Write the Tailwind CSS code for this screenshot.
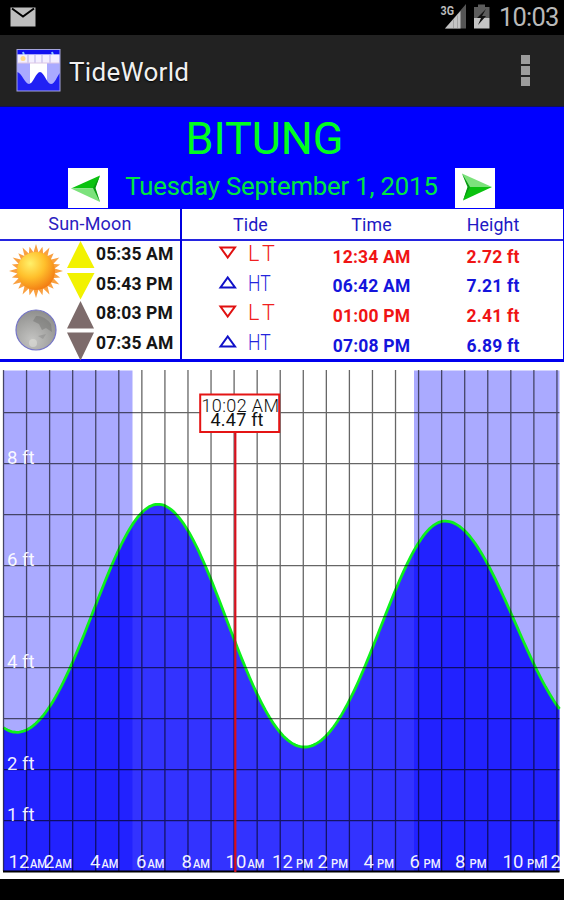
<!DOCTYPE html>
<html lang="en">
<head>
  <meta charset="UTF-8" />
  <meta name="viewport" content="width=device-width, initial-scale=1.0">
  <title>TideWorld</title>
  <script src="https://cdn.jsdelivr.net/npm/@tailwindcss/browser@4"></script>
</head>
<body class="w-[564px] h-[900px] bg-black overflow-hidden font-['Roboto',sans-serif]">

  <!-- status bar -->
  <div class="h-[35px] flex items-center justify-between pl-[10px] pr-[6px] text-[#b9b9b9]">
    <svg class="w-[26px] h-5 -mt-px" viewBox="0 0 26 20">
      <rect x="0.5" y="0.5" width="25" height="19" fill="#bebebe" />
      <path d="M2 1.500 L13 9.500 L24 1.500" fill="none" stroke="#000" stroke-width="2" />
    </svg>
    <div class="flex items-center">
      <svg class="w-[54px] h-[35px]" viewBox="440 0 54 35">
        <path d="M445 28.500 L466 4 V28.500 Z" fill="#555" />
        <path d="M445 28.500 L460.500 11 V28.500 Z" fill="#c4c4c4" />
        <path d="M453.500 19.500 V28 M457.500 15.500 V28" stroke="#999" stroke-width="0.800" />
        <text x="440.500" y="15.300" font-size="12.500" font-weight="700" fill="#bbb" textLength="13.500" lengthAdjust="spacingAndGlyphs">3G</text>
        <path d="M474 7 H478 V4.500 H485 V7 H489.500 V18 H474 Z" fill="#5c5c5c" />
        <path d="M474 18 H489.500 V28.500 H474 Z" fill="#c4c4c4" />
        <path d="M486 9 L477 18 H481 L478 25 L486 16 H482 Z" fill="#111" />
      </svg>
      <span class="ml-[5px] w-[59px] text-[25.500px] leading-[35px] tracking-[-0.8px]">10:03</span>
    </div>
  </div>

  <!-- action bar -->
  <div class="h-[71px] bg-[#222] flex items-center pl-4 pr-[34px]">
    <svg class="w-[45px] h-[43px]" viewBox="0 0 45 43">
      <rect x="1" y="0.500" width="43" height="41.500" fill="#aaf" />
      <rect x="1" y="0.500" width="43" height="5" fill="#1010f0" />
      <path d="M7 3 L8 6 M36 3 L37 6" stroke="#8cc4ff" stroke-width="2" />
      <rect x="1.500" y="5.500" width="42" height="8.500" fill="#f4efff" />
      <path d="M12 6 V14 M19 6 V14 M26 6 V14 M34 6 V14" stroke="#ccc6ef" stroke-width="1.500" />
      <circle cx="7" cy="9.500" r="2.500" fill="#ffd98a" />
      <rect x="14" y="14" width="17" height="20" fill="#fff" />
      <path d="M1 14 H44" stroke="#dcc6e6" stroke-width="1.200" />
      <path d="M1 23 C6 24 9 35 13 35 C17 35 20 23 24 23 C28 23 31 35 35 35 C39 35 41 27 44 24 V42 H1 Z" fill="#2020f4" />
      <rect x="1" y="0.500" width="43" height="41.500" fill="none" stroke="#a4a4dc" stroke-width="1" />
    </svg>
    <h1 class="ml-2 text-[26px] text-[#f0f0f0] leading-none tracking-[0.3px] pt-[2px] [text-shadow:0_1px_2px_#000]">TideWorld</h1>
    <div class="ml-auto flex flex-col gap-[2px]">
      <span class="size-[9px] bg-[#9c9c9c]"></span>
      <span class="size-[9px] bg-[#9c9c9c]"></span>
      <span class="size-[9px] bg-[#9c9c9c]"></span>
    </div>
  </div>

  <!-- station and date -->
  <div class="h-[103px] bg-[#00f] border-t border-[#11115a]">
    <h2 class="h-[59px] pr-[35px] text-[45px] leading-[63px] text-center text-[#00ff1e] tracking-[-0.1px]">BITUNG</h2>
    <div class="flex items-center pl-[68px] pr-[69px] justify-between">
      <button class="size-10 bg-white">
        <svg class="size-10" viewBox="0 0 40 40">
          <path d="M3 20.500 L32 7.500 L27 20 Z" fill="#0ac20f" />
          <path d="M3 20.500 L27 20 L32 34 Z" fill="#7ce27c" />
          <path d="M32 7.500 L25 20 L32 34 L27.500 20 Z" fill="#069a12" />
        </svg>
      </button>
      <span class="text-[25.700px] leading-10 pb-[3px] tracking-[-0.17px] text-[#00e640] whitespace-nowrap">Tuesday September 1, 2015</span>
      <button class="size-10 bg-white">
        <svg class="size-10" viewBox="0 0 40 40">
          <path d="M37 19 L7 5.500 L13 19 Z" fill="#7ce27c" />
          <path d="M37 19 L13 19 L8 32.500 Z" fill="#0ac20f" />
          <path d="M8 32.500 L15 19 L7 5.500 L12.500 19 Z" fill="#069a12" />
        </svg>
      </button>
    </div>
  </div>

  <!-- sun, moon and tide table -->
  <div class="h-[153px] bg-white flex border-b-[3px] border-r border-[#00e]">
    <section class="w-[182px] border-r-2 border-[#0000e0]">
      <h3 class="h-8 border-b-2 border-[#2424e0] text-center text-[18px] leading-[29px] tracking-[0.2px] text-[#2a20c0]">Sun-Moon</h3>
      <div class="flex">
        <svg class="w-24 h-[120px]" viewBox="0 241 96 120">
          <defs>
            <radialGradient id="sun" cx="0.350" cy="0.300" r="0.750">
              <stop offset="0" stop-color="#fff06a" />
              <stop offset="0.500" stop-color="#ffc02c" />
              <stop offset="1" stop-color="#f27a12" />
            </radialGradient>
            <radialGradient id="moon" cx="0.400" cy="0.750" r="0.800">
              <stop offset="0" stop-color="#c4c4c2" />
              <stop offset="1" stop-color="#8c8c8a" />
            </radialGradient>
          </defs>
          <g id="rays" fill="#f9a040"></g>
          <circle cx="36" cy="271" r="19" fill="url(#sun)" />
          <circle cx="36" cy="330" r="20" fill="url(#moon)" stroke="#7474c8" stroke-width="1.200" />
          <path d="M36 316 Q44 315 51 324 L52 332 L46 328 L42 330 L39 324 L33 321 Z" fill="#6f6f6d" opacity="0.450" />
          <path d="M38 336 L46 334 L43 339 Z" fill="#777" opacity="0.350" />
          <circle cx="33" cy="343" r="4" fill="#deded8" opacity="0.600" />
          <path d="M80.500 241 L94.500 268 H67 Z M67 273 H94.500 L80.500 299.500 Z" fill="#f2f200" />
          <path d="M80.500 301 L94 328.500 H67 Z M67 332.500 H94 L80.500 360.500 Z" fill="#7d6b6b" />
        </svg>
        <ul class="text-[17.500px] font-bold leading-[29.700px] tracking-[0.1px] text-[#151515] whitespace-nowrap -mt-px">
          <li>05:35 AM</li>
          <li>05:43 PM</li>
          <li>08:03 PM</li>
          <li>07:35 AM</li>
        </ul>
      </div>
    </section>

    <section class="flex-1">
      <div class="h-8 border-b-2 border-[#2424e0] flex text-[17.800px] leading-[32px] tracking-[0.1px] text-[#2018c4]">
        <span class="w-[118px] pl-[51px]">Tide</span>
        <span class="w-[143px] text-center">Time</span>
        <span class="w-[100px] text-center">Height</span>
      </div>
      <div class="h-[29.700px] flex items-center font-bold text-[17.500px] tracking-[0.2px] text-[#f01414]">
        <svg class="w-[118px] h-[30px]" viewBox="0 0 118 30">
          <path d="M38.500 6.500 H53 L45.700 16.500 Z" fill="none" stroke="#e01010" stroke-width="2" />
          <text x="66" y="20" font-size="21.500" font-weight="300" fill="#f02020" textLength="27">L T</text>
        </svg>
        <span class="w-[143px] pt-[2px] text-center">12:34 AM</span>
        <span class="w-[100px] pt-[2px] text-center">2.72 ft</span>
      </div>
      <div class="h-[29.700px] flex items-center font-bold text-[17.500px] tracking-[0.2px] text-[#1414dc]">
        <svg class="w-[118px] h-[30px]" viewBox="0 0 118 30">
          <path d="M38.500 16.500 H53 L45.700 6.500 Z" fill="none" stroke="#1010c8" stroke-width="2" />
          <text x="66" y="20" font-size="21.500" font-weight="300" fill="#2424dc" textLength="23" lengthAdjust="spacingAndGlyphs">HT</text>
        </svg>
        <span class="w-[143px] pt-[2px] text-center">06:42 AM</span>
        <span class="w-[100px] pt-[2px] text-center">7.21 ft</span>
      </div>
      <div class="h-[29.700px] flex items-center font-bold text-[17.500px] tracking-[0.2px] text-[#f01414]">
        <svg class="w-[118px] h-[30px]" viewBox="0 0 118 30">
          <path d="M38.500 6.500 H53 L45.700 16.500 Z" fill="none" stroke="#e01010" stroke-width="2" />
          <text x="66" y="20" font-size="21.500" font-weight="300" fill="#f02020" textLength="27">L T</text>
        </svg>
        <span class="w-[143px] pt-[2px] text-center">01:00 PM</span>
        <span class="w-[100px] pt-[2px] text-center">2.41 ft</span>
      </div>
      <div class="h-[29.700px] flex items-center font-bold text-[17.500px] tracking-[0.2px] text-[#1414dc]">
        <svg class="w-[118px] h-[30px]" viewBox="0 0 118 30">
          <path d="M38.500 16.500 H53 L45.700 6.500 Z" fill="none" stroke="#1010c8" stroke-width="2" />
          <text x="66" y="20" font-size="21.500" font-weight="300" fill="#2424dc" textLength="23" lengthAdjust="spacingAndGlyphs">HT</text>
        </svg>
        <span class="w-[143px] pt-[2px] text-center">07:08 PM</span>
        <span class="w-[100px] pt-[2px] text-center">6.89 ft</span>
      </div>
    </section>
  </div>

  <!-- tide chart -->
  <svg id="chart" class="block w-[564px] h-[517px] bg-white" viewBox="0 362 564 517">
    <rect x="3" y="370.500" width="129.500" height="501" fill="#aaf" />
    <rect x="414" y="370.500" width="145.500" height="501" fill="#aaf" />
    <path id="water" fill="#00f" fill-opacity="0.800" />
    <path id="curve" fill="none" stroke="#0cf01c" stroke-width="2.800" />
    <path id="grid" fill="none" stroke="#000" stroke-opacity="0.600" stroke-width="1.300" />
    <path d="M3 871.500 H559.500" stroke="#000" stroke-width="2" />
    <g id="labels" fill="#fff" fill-opacity="0.950" font-size="18.500"></g>
    <path d="M235.300 432 V872" stroke="#d8101c" stroke-width="2.200" />
    <rect x="200.200" y="394.500" width="79" height="37.500" fill="#fff" stroke="#e41414" stroke-width="2" />
    <text x="201.500" y="411.500" font-size="18" font-weight="300" fill="#111" textLength="77.500">10:02 AM</text>
    <text x="210.500" y="426.300" font-size="18" fill="#111" textLength="53">4.47 ft</text>
  </svg>

  <script>
    const LEFT = 3.5, HOUR = 23.06, ZERO = 871.5, FOOT = 51;

    // hour, feet, sag of the curve on the way to this point
    const tides = [[-5.6, 7.1, 0], [0.57, 2.73, 0], [6.7, 7.2, 8], [13.05, 2.44, 6], [19.15, 6.87, 8], [25.4, 2.79, 2]];

    function levelAt(x) {
      const t = (x - LEFT) / HOUR;
      let i = 1;
      while (tides[i][0] < t) i++;
      const a = tides[i - 1], b = tides[i];
      const p = (t - a[0]) / (b[0] - a[0]);
      const feet = a[1] + (b[1] - a[1]) * (1 - Math.cos(Math.PI * p)) / 2;
      return ZERO - feet * FOOT + b[2] * Math.sin(Math.PI * p) ** 2;
    }

    let line = "";
    for (let x = 3.5; x <= 559.5; x += 2) {
      line += (line ? "L" : "M") + x + " " + levelAt(x).toFixed(1);
    }
    document.getElementById("curve").setAttribute("d", line);
    document.getElementById("water").setAttribute("d", line + "L559.5 871.5H3.5Z");

    let grid = "";
    for (let h = 0; h <= 24; h++) grid += `M${LEFT + h * HOUR} 370V871`;
    for (let f = 1; f <= 9; f++) grid += `M3 ${ZERO - f * FOOT + 0.2}H559.5`;
    document.getElementById("grid").setAttribute("d", grid);

    let labels = "";
    for (const f of [8, 6, 4, 2, 1]) {
      labels += `<text x="7" y="${ZERO - f * FOOT + 0.7}" textLength="27.5">${f} ft</text>`;
    }
    const hours = [
      [8.5, "12", 30, "AM"], [44, "2", 55, "AM"], [90, "4", 101.5, "AM"], [136, "6", 147.5, "AM"],
      [181.5, "8", 193, "AM"], [225.5, "10", 247.5, "AM"], [272, "12", 296, "PM"], [317.5, "2", 331, "PM"],
      [363.5, "4", 377, "PM"], [409.5, "6", 423.5, "PM"], [455, "8", 469.5, "PM"], [502.5, "10", 527, "PM"], [540, "12", 0, ""]
    ];
    for (const [x, n, sx, suffix] of hours) {
      labels += `<text x="${x}" y="868">${n}</text>`;
      if (suffix) labels += `<text x="${sx}" y="868" font-size="12.5" font-weight="500" textLength="17" lengthAdjust="spacingAndGlyphs">${suffix}</text>`;
    }
    document.getElementById("labels").innerHTML = labels;

    // sun rays
    let rays = "";
    for (let i = 0; i < 24; i++) {
      rays += `<path d="M33 254 L36 ${i % 2 ? 246 : 244} L39 254Z" transform="rotate(${i * 15} 36 271)"/>`;
    }
    document.getElementById("rays").innerHTML = rays;
  </script>
</body>
</html>
